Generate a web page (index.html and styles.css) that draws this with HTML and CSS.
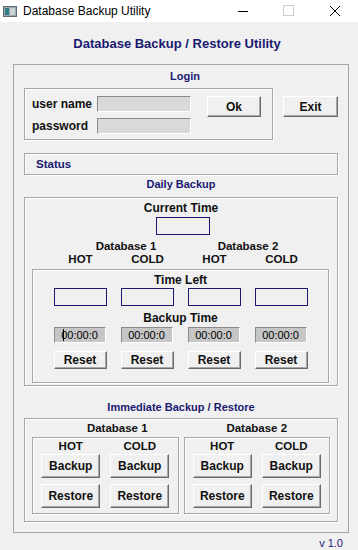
FILE: index.html
```html
<!DOCTYPE html>
<html lang="en">
<head>
    <meta charset="UTF-8">
    <meta name="viewport" content="width=device-width, initial-scale=1.0">
    <title>Database Backup Utility</title>
    <link rel="stylesheet" href="styles.css">
</head>
<body>
    <div class="titlebar">
        <svg class="app-icon" width="14" height="11" viewBox="0 0 14 11">
            <rect x="0.5" y="0.5" width="13" height="10" fill="#9aa7ad" stroke="#5d6a70"/>
            <rect x="2" y="2" width="4" height="7" fill="#2f7e86"/>
            <rect x="7" y="2" width="5" height="7" fill="#c9d2d6"/>
        </svg>
        <span class="window-title">Database Backup Utility</span>
        <div class="window-controls">
            <svg width="46" height="22" viewBox="0 0 46 22"><line x1="18" y1="11.5" x2="28" y2="11.5" stroke="#000" stroke-width="1"/></svg>
            <svg width="46" height="22" viewBox="0 0 46 22"><rect x="17.5" y="5.5" width="10" height="10" fill="none" stroke="#cccccc"/></svg>
            <svg width="46" height="22" viewBox="0 0 46 22"><path d="M18 6 L28 16 M28 6 L18 16" stroke="#000" stroke-width="1"/></svg>
        </div>
    </div>

    <h1 class="app-heading">Database Backup / Restore Utility</h1>

    <div class="frame">
        <div class="group-label login-label">Login</div>
        <div class="login-row">
            <div class="groupbox login-box">
                <label class="field-label">user name</label>
                <input class="sunken" type="text">
                <label class="field-label">password</label>
                <input class="sunken" type="password">
                <button class="button ok-button">Ok</button>
            </div>
            <button class="button exit-button">Exit</button>
        </div>

        <div class="groupbox status-box">Status</div>

        <div class="group-label daily-label">Daily Backup</div>
        <div class="groupbox daily-box">
            <div class="caption current-caption">Current Time</div>
            <div class="time-box current-time"></div>
            <div class="db-grid">
                <div class="db-name db-first">Database 1</div>
                <div class="db-name">Database 2</div>
            </div>
            <div class="col-grid kind-row">
                <div>HOT</div><div>COLD</div><div>HOT</div><div>COLD</div>
            </div>
            <div class="groupbox timer-box">
                <div class="caption">Time Left</div>
                <div class="col-grid left-row">
                    <div class="time-box"></div>
                    <div class="time-box"></div>
                    <div class="time-box"></div>
                    <div class="time-box"></div>
                </div>
                <div class="caption backup-caption">Backup Time</div>
                <div class="col-grid field-row">
                    <div class="sunken backup-field"><span class="caret"></span>00:00:0</div>
                    <div class="sunken backup-field">00:00:0</div>
                    <div class="sunken backup-field">00:00:0</div>
                    <div class="sunken backup-field">00:00:0</div>
                </div>
                <div class="col-grid reset-row">
                    <button class="button">Reset</button>
                    <button class="button">Reset</button>
                    <button class="button">Reset</button>
                    <button class="button">Reset</button>
                </div>
            </div>
        </div>

        <div class="group-label immediate-label">Immediate Backup / Restore</div>
        <div class="groupbox immediate-box">
            <div class="db-pair">
                <div class="db-name db-first">Database 1</div>
                <div class="db-name">Database 2</div>
            </div>
            <div class="db-pair">
                <div class="groupbox db-box">
                    <div class="kind">HOT</div>
                    <div class="kind">COLD</div>
                    <button class="button big">Backup</button>
                    <button class="button big">Backup</button>
                    <button class="button big">Restore</button>
                    <button class="button big">Restore</button>
                </div>
                <div class="groupbox db-box">
                    <div class="kind">HOT</div>
                    <div class="kind">COLD</div>
                    <button class="button big">Backup</button>
                    <button class="button big">Backup</button>
                    <button class="button big">Restore</button>
                    <button class="button big">Restore</button>
                </div>
            </div>
        </div>
    </div>

    <div class="version">v 1.0</div>
</body>
</html>
```

FILE: styles.css
```css
body {
    margin: 0;
    width: 358px;
    height: 550px;
    background-color: #f0f0f0;
    font-family: "Liberation Sans", Arial, sans-serif;
    color: #111;
    overflow: hidden;
}
.titlebar {
    height: 22px;
    background: #fff;
    display: flex;
    align-items: center;
}
.app-icon {
    margin-left: 3px;
    margin-right: 6px;
}
.window-title {
    font-size: 12px;
    color: #000;
    flex: 1;
}
.window-controls {
    display: flex;
}
.window-controls svg {
    display: block;
}
.app-heading {
    margin: 14px 0 0;
    font-size: 13px;
    line-height: 16px;
    text-align: center;
    color: #191970;
    padding-right: 4px;
}
.frame {
    box-sizing: border-box;
    margin: 12px 0 0 13px;
    width: 336px;
    height: 469px;
    border: 1px solid #a6a6a6;
    padding: 0 10px;
}
.groupbox {
    box-sizing: border-box;
    border: 1px solid #a6a6a6;
    box-shadow: inset 1px 1px 0 #fff, 1px 1px 0 #fff;
}
.group-label {
    font-size: 11px;
    font-weight: bold;
    line-height: 14px;
    text-align: center;
    color: #191970;
}
.login-label {
    margin-top: 4px;
    padding-left: 8px;
}
.login-row {
    display: flex;
    align-items: flex-start;
    margin-top: 5px;
}
.login-box {
    width: 249px;
    height: 52px;
    display: grid;
    grid-template-columns: 65px 94px 16px 54px;
    grid-template-rows: 16px 16px;
    grid-auto-flow: row;
    row-gap: 6px;
    padding: 7px 0 0 7px;
    align-items: center;
}
.login-box label {
    grid-column: 1;
}
.login-box input {
    grid-column: 2;
    height: 16px;
    width: 94px;
}
.field-label {
    font-size: 12px;
    font-weight: bold;
}
.sunken {
    box-sizing: border-box;
    border: 1px solid;
    border-color: #8a8a8a #fff #fff #8a8a8a;
    background: #d9d9d9;
    margin: 0;
    padding: 0;
}
.button {
    box-sizing: border-box;
    border: 1px solid;
    border-color: #fff #6b6b6b #6b6b6b #fff;
    box-shadow: inset -1px -1px 0 #a8a8a8;
    background: #f0f0f0;
    font-family: "Liberation Sans", Arial, sans-serif;
    font-size: 12px;
    font-weight: bold;
    color: #111;
    padding: 0;
    margin: 0;
    height: 18px;
}
.ok-button {
    grid-row: 1 / span 2;
    grid-column: 4;
    align-self: start;
    height: 21px;
}
.exit-button {
    width: 55px;
    height: 21px;
    margin: 8px 0 0 10px;
}
.status-box {
    margin-top: 13px;
    height: 22px;
    padding-left: 11px;
    font-size: 11.5px;
    font-weight: bold;
    line-height: 20px;
    color: #191970;
}
.daily-label {
    margin-top: 2px;
}
.daily-box {
    margin-top: 6px;
    height: 189px;
    padding: 3px 0 0;
}
.caption {
    font-size: 12px;
    font-weight: bold;
    line-height: 14px;
    text-align: center;
}
.time-box {
    box-sizing: border-box;
    height: 18px;
    width: 53px;
    border: 1px solid #191970;
}
.current-time {
    width: 54px;
    margin: 2px 0 0 131px;
}
.db-grid {
    display: grid;
    grid-template-columns: 120px 120px;
    column-gap: 14px;
    justify-content: center;
    margin-top: 5px;
}
.db-name {
    font-size: 11.5px;
    font-weight: bold;
    line-height: 13px;
    text-align: center;
}
.db-first {
    padding-left: 24px;
}
.col-grid {
    display: grid;
    grid-template-columns: repeat(4, 53px);
    column-gap: 14px;
    justify-content: center;
}
.kind-row div {
    font-size: 11.5px;
    font-weight: bold;
    line-height: 13px;
    text-align: center;
}
.timer-box {
    margin: 3px 8px 0 7px;
    height: 114px;
    padding-top: 3px;
}
.left-row {
    margin-top: 1px;
}
.backup-caption {
    margin-top: 5px;
}
.field-row {
    margin-top: 2px;
}
.backup-field {
    height: 16px;
    width: 52px;
    background: #c6c6c6;
    font-size: 11px;
    line-height: 14px;
    text-align: center;
    color: #000;
    position: relative;
}
.caret {
    position: absolute;
    left: 8px;
    top: 1px;
    height: 12px;
    border-left: 1px solid #000;
}
.reset-row {
    margin-top: 8px;
}
.immediate-label {
    margin-top: 14px;
}
.immediate-box {
    margin-top: 4px;
    height: 104px;
    padding: 2px 7px 0;
}
.db-pair {
    display: grid;
    grid-template-columns: 1fr 1fr;
    column-gap: 5px;
}
.db-pair .db-name {
    line-height: 14px;
}
.db-box {
    margin-top: 2px;
    height: 77px;
    display: grid;
    grid-template-columns: 59px 59px;
    grid-template-rows: 14px 24px 24px;
    column-gap: 10px;
    row-gap: 1px;
    justify-content: center;
    padding-top: 1px;
}
.db-box .button:nth-of-type(3),
.db-box .button:nth-of-type(4) {
    margin-top: 5px;
}
.kind {
    font-size: 11.5px;
    font-weight: bold;
    line-height: 14px;
    text-align: center;
}
.big {
    height: 24px;
}
.version {
    font-size: 11px;
    line-height: 14px;
    color: #191970;
    text-align: right;
    padding-right: 15px;
    margin-top: 3px;
}
```
